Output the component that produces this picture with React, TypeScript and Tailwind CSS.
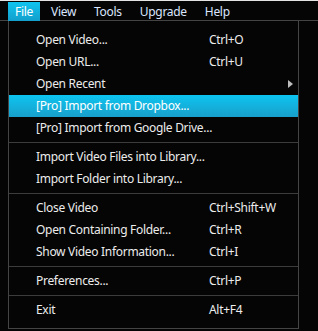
import { ReactNode } from "react";

type Item =
  | { kind: "item"; label: string; shortcut?: string; submenu?: boolean; active?: boolean }
  | { kind: "sep" };

const items: Item[] = [
  { kind: "item", label: "Open Video...", shortcut: "Ctrl+O" },
  { kind: "item", label: "Open URL...", shortcut: "Ctrl+U" },
  { kind: "item", label: "Open Recent", submenu: true },
  { kind: "item", label: "[Pro] Import from Dropbox...", active: true },
  { kind: "item", label: "[Pro] Import from Google Drive..." },
  { kind: "sep" },
  { kind: "item", label: "Import Video Files into Library..." },
  { kind: "item", label: "Import Folder into Library..." },
  { kind: "sep" },
  { kind: "item", label: "Close Video", shortcut: "Ctrl+Shift+W" },
  { kind: "item", label: "Open Containing Folder...", shortcut: "Ctrl+R" },
  { kind: "item", label: "Show Video Information...", shortcut: "Ctrl+I" },
  { kind: "sep" },
  { kind: "item", label: "Preferences...", shortcut: "Ctrl+P" },
  { kind: "sep" },
  { kind: "item", label: "Exit", shortcut: "Alt+F4" },
];

const MenuTitle = ({ children, active }: { children: ReactNode; active?: boolean }) => (
  <div
    className={
      active
        ? "h-[19px] px-[7px] flex items-center text-white bg-gradient-to-b from-[#10c4f0] to-[#139fcc]"
        : "h-[19px] px-[7px] flex items-center text-[#dbe6ff]"
    }
  >
    {children}
  </div>
);

export default function App() {
  return (
    <div
      className="w-[318px] h-[331px] bg-[#050505] text-[12px] tracking-[-0.3px] overflow-hidden"
      style={{ fontFamily: '"Noto Sans", "Open Sans", sans-serif' }}
    >
      <div className="h-px bg-[#e4e4e4]" />
      {/* menu bar */}
      <div className="h-[20px] pt-px pl-[8px] flex gap-[4px] border-b border-[#444] leading-none">
        <MenuTitle active>File</MenuTitle>
        <MenuTitle>View</MenuTitle>
        <MenuTitle>Tools</MenuTitle>
        <MenuTitle>Upgrade</MenuTitle>
        <MenuTitle>Help</MenuTitle>
      </div>

      {/* dropdown */}
      <div className="ml-[8px] w-[291px] border-x border-b border-[#444] pt-[8px] pb-[7px] text-[#ececec]">
        {items.map((it, i) =>
          it.kind === "sep" ? (
            <div key={i} className="my-[3px] h-px bg-[#3c3c3c]" />
          ) : (
            <div
              key={i}
              className={
                it.active
                  ? "h-[22px] flex items-center pl-[27px] pr-[5px] text-white bg-gradient-to-b from-[#0cc4f0] to-[#17a0cb]"
                  : "h-[22px] flex items-center pl-[27px] pr-[5px]"
              }
            >
              <span className="w-[173px] whitespace-nowrap">{it.label}</span>
              <span className="flex-1 whitespace-nowrap">{it.shortcut}</span>
              {it.submenu && (
                <svg width="5" height="8" viewBox="0 0 5 8">
                  <path d="M0 0 L5 4 L0 8 Z" fill="#bdbdbd" />
                </svg>
              )}
            </div>
          )
        )}
      </div>
    </div>
  );
}
